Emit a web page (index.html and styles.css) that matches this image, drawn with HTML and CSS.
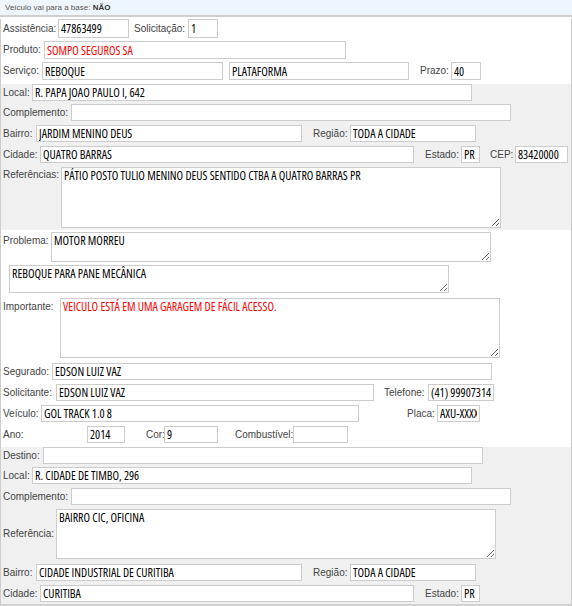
FILE: index.html
```html
<!DOCTYPE html>
<html lang="pt-BR">
<head>
<meta charset="utf-8">
<title>Atendimento</title>
<link rel="stylesheet" href="styles.css">
</head>
<body>
<div class="topbar">Veículo vai para a base: <b>NÃO</b></div>
<div class="panel">
  <section class="sec">
    <div class="row h19 mt2">
      <label class="lbl w55">Assistência:</label><input class="in w71" value="47863499" readonly>
      <label class="lbl w54 ml5">Solicitação:</label><input class="in w30" value="1" readonly>
    </div>
    <div class="row h18 mt3">
      <label class="lbl w41">Produto:</label><input class="in w302 red" value="SOMPO SEGUROS SA" readonly>
    </div>
    <div class="row h18 mt3">
      <label class="lbl w39">Serviço:</label><input class="in w181" value="REBOQUE" readonly>
      <input class="in w180 ml6" value="PLATAFORMA" readonly>
      <label class="lbl w31 ml11">Prazo:</label><input class="in w30" value="40" readonly>
    </div>
  </section>

  <section class="sec gray">
    <div class="row mt2">
      <label class="lbl w29">Local:</label><input class="in w440" value="R. PAPA JOAO PAULO I, 642" readonly>
    </div>
    <div class="row mt3">
      <label class="lbl w68">Complemento:</label><input class="in w440" value="" readonly>
    </div>
    <div class="row">
      <label class="lbl w33">Bairro:</label><input class="in w266" value="JARDIM MENINO DEUS" readonly>
      <label class="lbl w37 ml11">Região:</label><input class="in w126" value="TODA A CIDADE" readonly>
    </div>
    <div class="row">
      <label class="lbl w37">Cidade:</label><input class="in w374" value="QUATRO BARRAS" readonly>
      <label class="lbl w36 ml11">Estado:</label><input class="in w19" value="PR" readonly>
      <label class="lbl w25 ml10">CEP:</label><input class="in w53" value="83420000" readonly>
    </div>
    <div class="row top">
      <label class="lbl w58 pt2">Referências:</label><textarea class="ta w440 h61" readonly>PÁTIO POSTO TULIO MENINO DEUS SENTIDO CTBA A QUATRO BARRAS PR</textarea>
    </div>
  </section>

  <section class="sec">
    <div class="row top mt2">
      <label class="lbl w48 pt3">Problema:</label><textarea class="ta w440 h30" readonly>MOTOR MORREU</textarea>
    </div>
    <div class="row top mt3 ml6">
      <textarea class="ta w440 h28" readonly>REBOQUE PARA PANE MECÂNICA</textarea>
    </div>
    <div class="row top mt5">
      <label class="lbl w57 pt3">Importante:</label><textarea class="ta w440 h60 red" readonly>VEICULO ESTÁ EM UMA GARAGEM DE FÁCIL ACESSO.</textarea>
    </div>
    <div class="row mt5">
      <label class="lbl w49">Segurado:</label><input class="in w440" value="EDSON LUIZ VAZ" readonly>
    </div>
    <div class="row">
      <label class="lbl w53">Solicitante:</label><input class="in w318" value="EDSON LUIZ VAZ" readonly>
      <label class="lbl w44 ml10">Telefone:</label><input class="in w66" value="(41) 999073142" readonly>
    </div>
    <div class="row">
      <label class="lbl w38">Veículo:</label><input class="in w318" value="GOL TRACK 1.0 8" readonly>
      <label class="lbl w30 ml48">Placa:</label><input class="in w43" value="AXU-XXXX" readonly>
    </div>
    <div class="row">
      <label class="lbl w84">Ano:</label><input class="in w38" value="2014" readonly>
      <label class="lbl w18 ml21">Cor:</label><input class="in w54" value="9" readonly>
      <label class="lbl w58 ml17">Combustível:</label><input class="in w55" value="" readonly>
    </div>
  </section>

  <section class="sec gray">
    <div class="row mt2">
      <label class="lbl w40">Destino:</label><input class="in w440" value="" readonly>
    </div>
    <div class="row mt3">
      <label class="lbl w29">Local:</label><input class="in w440" value="R. CIDADE DE TIMBO, 296" readonly>
    </div>
    <div class="row">
      <label class="lbl w68">Complemento:</label><input class="in w440" value="" readonly>
    </div>
    <div class="row">
      <label class="lbl w53">Referência:</label><textarea class="ta w440 h50" readonly>BAIRRO CIC, OFICINA</textarea>
    </div>
    <div class="row mt5">
      <label class="lbl w33">Bairro:</label><input class="in w266" value="CIDADE INDUSTRIAL DE CURITIBA" readonly>
      <label class="lbl w37 ml11">Região:</label><input class="in w126" value="TODA A CIDADE" readonly>
    </div>
    <div class="row">
      <label class="lbl w37">Cidade:</label><input class="in w374" value="CURITIBA" readonly>
      <label class="lbl w36 ml11">Estado:</label><input class="in w19" value="PR" readonly>
    </div>
  </section>
</div>
</body>
</html>
```

FILE: styles.css
```css
* { box-sizing: border-box; }

body {
  margin: 0;
  font-family: "Liberation Sans", Arial, sans-serif;
  font-size: 10px;
  color: #444;
  background: #fff;
}

.topbar {
  height: 17px;
  background: #eef6fd;
  border-bottom: 2px solid #cfcfcf;
  padding-left: 5px;
  font-size: 8px;
  line-height: 15px;
  color: #555;
}
.topbar b { color: #333; }

.panel {
  border-left: 1px solid #cccccc;
  border-right: 1px solid #cccccc;
  border-bottom: 4px solid #d2d2d2;
}

.sec {
  padding: 0 2px 2px;
  background: #fff;
}
.sec.gray { background: #f0f0f0; }

.row {
  display: flex;
  align-items: center;
  margin-top: 4px;
}
.row.top { align-items: flex-start; }

.lbl {
  flex: none;
  white-space: nowrap;
  color: #444;
  line-height: 12px;
}

.in, .ta {
  flex: none;
  margin: 0;
  border: 1px solid #cccccc;
  border-radius: 0;
  background: #fff;
  color: #000;
  font-family: "Open Sans", "Liberation Sans", sans-serif;
  font-stretch: condensed;
  font-size: 12px;
  outline: none;
}
.in {
  height: 17px;
  padding: 0 2px;
}
.ta {
  padding: 1px 2px;
  line-height: 14px;
  resize: both;
}
.red { color: #ff0000; }

.h18 .in { height: 18px; }
.h19 .in { height: 19px; }

.h28 { height: 28px; }
.h30 { height: 30px; }
.h50 { height: 50px; }
.h60 { height: 60px; }
.h61 { height: 61px; }

.mt2 { margin-top: 2px; }
.mt3 { margin-top: 3px; }
.mt5 { margin-top: 5px; }
.pt2 { padding-top: 2px; }
.pt3 { padding-top: 3px; }

.ml5 { margin-left: 5px; }
.ml6 { margin-left: 6px; }
.ml10 { margin-left: 10px; }
.ml11 { margin-left: 11px; }
.ml17 { margin-left: 17px; }
.ml21 { margin-left: 21px; }
.ml48 { margin-left: 48px; }

.w18 { width: 18px; }
.w19 { width: 19px; }
.w25 { width: 25px; }
.w29 { width: 29px; }
.w30 { width: 30px; }
.w31 { width: 31px; }
.w33 { width: 33px; }
.w36 { width: 36px; }
.w37 { width: 37px; }
.w38 { width: 38px; }
.w39 { width: 39px; }
.w40 { width: 40px; }
.w41 { width: 41px; }
.w43 { width: 43px; }
.w44 { width: 44px; }
.w48 { width: 48px; }
.w49 { width: 49px; }
.w53 { width: 53px; }
.w54 { width: 54px; }
.w55 { width: 55px; }
.w57 { width: 57px; }
.w58 { width: 58px; }
.w66 { width: 66px; }
.w68 { width: 68px; }
.w71 { width: 71px; }
.w84 { width: 84px; }
.w126 { width: 126px; }
.w180 { width: 180px; }
.w181 { width: 181px; }
.w266 { width: 266px; }
.w302 { width: 302px; }
.w318 { width: 318px; }
.w374 { width: 374px; }
.w440 { width: 440px; }
```
